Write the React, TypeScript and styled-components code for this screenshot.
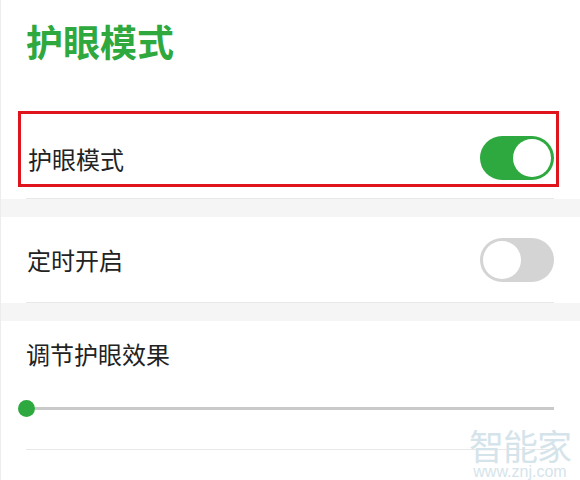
import React from 'react'
import styled, { createGlobalStyle } from 'styled-components'

const GlobalStyle = createGlobalStyle`
    html, body {
        margin: 0;
        padding: 0;
        background: #fff;
    }
    body {
        font-family: "Noto Sans CJK SC", "Noto Sans", sans-serif;
    }
`

const SPage = styled.div`
    position: relative;
    width: 580px;
    height: 480px;
    overflow: hidden;
    background: #fff;
    border-left: 1px solid #ececec;
    box-sizing: border-box;
`
const SHeader = styled.div`
    height: 113px;
    padding: 14px 0 0 25px;
    box-sizing: border-box;
`
const STitle = styled.div`
    font-size: 37px;
    font-weight: 700;
    line-height: 54px;
    color: #2fa83e;
`
const SSection = styled.div`
    background: #fff;
    padding: 0 26px 0 25px;
`
const SBand = styled.div`
    height: 18px;
    background: #f5f5f5;
`
const SRow = styled.div<{ $h: number, $marked?: boolean }>`
    display: flex;
    align-items: center;
    justify-content: space-between;
    height: ${p => p.$h}px;
    box-sizing: border-box;
    padding: 0 0 0 1px;
    ${p => p.$marked && `
        outline: 3px solid #e0141c;
        outline-offset: -1px;
        margin: 0 -3px 0 -6px;
        padding: 18px 3px 0 8px;
    `}
`
const SLabel = styled.span`
    font-size: 24px;
    color: #222;
`
const SDivider = styled.div<{ $top: number }>`
    margin-top: ${p => p.$top}px;
    height: 1px;
    background: #e8e8e8;
`
const SToggle = styled.div<{ $on: boolean }>`
    width: 74px;
    height: 44px;
    border-radius: 22px;
    box-sizing: border-box;
    display: flex;
    align-items: center;
    justify-content: ${p => (p.$on ? 'flex-end' : 'flex-start')};
    background: ${p => (p.$on ? '#2ea93f' : '#d4d4d4')};
    padding: 3px;
`
const SKnob = styled.div`
    width: 38px;
    height: 38px;
    border-radius: 50%;
    background: #fff;
`
const SSlider = styled.div`
    position: relative;
    height: 16px;
    display: flex;
    align-items: center;
    margin-top: 26px;
`
const STrack = styled.div`
    flex: 1;
    height: 3px;
    background: #c9c9c9;
`
const SThumb = styled.div`
    position: absolute;
    left: -8px;
    top: 0;
    width: 17px;
    height: 17px;
    border-radius: 50%;
    background: #2ea93f;
`
const SSliderTitle = styled.div`
    padding-top: 16px;
    line-height: 34px;
`
const SMark = styled.div`
    position: absolute;
    right: 9px;
    bottom: 0;
    display: flex;
    flex-direction: column;
    align-items: center;
    color: #d5e4ea;
    pointer-events: none;
`
const SMarkBig = styled.div`
    font-size: 35px;
    line-height: 34px;
    letter-spacing: -1px;
`
const SMarkSmall = styled.div`
    font-family: "Liberation Sans", Arial, sans-serif;
    font-size: 16px;
    line-height: 17px;
    margin-top: 1px;
`

const App = () => {
    return (
        <SPage>
            <GlobalStyle />
            <SHeader>
                <STitle>护眼模式</STitle>
            </SHeader>
            <SSection>
                <SRow $h={72} $marked>
                    <SLabel>护眼模式</SLabel>
                    <SToggle $on><SKnob /></SToggle>
                </SRow>
                <SDivider $top={13} />
            </SSection>
            <SBand />
            <SSection>
                <SRow $h={85}>
                    <SLabel>定时开启</SLabel>
                    <SToggle $on={false}><SKnob /></SToggle>
                </SRow>
                <SDivider $top={0} />
            </SSection>
            <SBand />
            <SSection>
                <SSliderTitle>
                    <SLabel>调节护眼效果</SLabel>
                </SSliderTitle>
                <SSlider>
                    <SThumb />
                    <STrack />
                </SSlider>
                <SDivider $top={33} />
            </SSection>
            <SMark>
                <SMarkBig>智能家</SMarkBig>
                <SMarkSmall>www.znj.com</SMarkSmall>
            </SMark>
        </SPage>
    )
}

export default App
